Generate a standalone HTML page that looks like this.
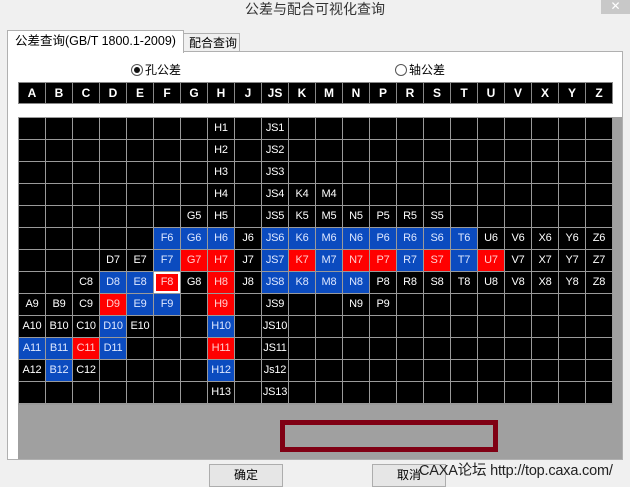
<!DOCTYPE html>
<html><head><meta charset="utf-8"><style>
*{margin:0;padding:0;box-sizing:border-box}
body{width:630px;height:487px;background:#f0f0f0;font-family:"Liberation Sans","Noto Sans CJK SC",sans-serif;position:relative;overflow:hidden}
.abs{position:absolute}
.title{left:0;width:630px;top:0;text-align:center;font-size:14px;color:#333;line-height:18px}
.close{left:601px;top:0;width:29px;height:14px;background:#c8c8c8;color:#fff;font-size:12px;text-align:center;line-height:13px}
.pane{left:7px;top:51px;width:616px;height:409px;background:#fff;border:1px solid #b0b0b0}
.tab1{left:7px;top:30px;width:177px;height:23px;background:#fff;border:1px solid #b0b0b0;border-bottom:none;font-size:12.5px;line-height:20px;padding-left:7px;z-index:2;color:#000}
.tab2{left:183px;top:33px;width:57px;height:19px;background:#f0f0f0;border:1px solid #b0b0b0;font-size:12px;line-height:18px;padding-left:5px}
.radio{font-size:12px;line-height:14px;top:63px}
.radio i{display:inline-block;width:12px;height:12px;border:1px solid #555;border-radius:50%;vertical-align:-2px;margin-right:2px;position:relative;background:#fff}
.radio i.on::after{content:"";position:absolute;left:2px;top:2px;width:6px;height:6px;border-radius:50%;background:#111}
.hdr{left:18px;top:82px;width:595px;height:22px;display:grid;grid-template-columns:repeat(22,26px);gap:1px;background:#888;padding:1px}
.hdr span{background:#000;color:#fff;font-weight:bold;font-size:12px;text-align:center;line-height:20px}
.gp{left:18px;top:117px;width:604px;height:342px;background:#a0a0a0}
.grid{left:18px;top:117px;width:595px;height:288px;display:grid;grid-template-columns:repeat(22,26px);grid-auto-rows:21px;gap:1px;background:#9a9a9a;padding:1px}
.grid i{background:#000;color:#fff;font-style:normal;font-size:11px;letter-spacing:-0.2px;text-align:center;line-height:21px;white-space:nowrap;overflow:hidden}
.grid i.b{background:#0b4bbf;color:#dfe8ff}
.grid i.r{background:#f00;color:#ffd0d0}
.grid i.w{box-shadow:inset 0 0 0 2px #fff}
.redbox{left:280px;top:420px;width:218px;height:32px;border:5px solid #800014}
.btn{top:464px;width:74px;height:23px;background:#e6e6e6;border:1px solid #adadad;font-size:12px;text-align:center;line-height:21px}
.wm{left:419px;top:461px;font-size:14.5px;letter-spacing:-0.2px;color:#222;line-height:20px}
</style></head><body>
<div class="abs title">公差与配合可视化查询</div>
<div class="abs close">✕</div>
<div class="abs pane"></div>
<div class="abs tab2">配合查询</div>
<div class="abs tab1">公差查询(GB/T 1800.1-2009)</div>
<div class="abs radio" style="left:131px"><i class="on"></i>孔公差</div>
<div class="abs radio" style="left:395px"><i></i>轴公差</div>
<div class="abs hdr"><span>A</span><span>B</span><span>C</span><span>D</span><span>E</span><span>F</span><span>G</span><span>H</span><span>J</span><span>JS</span><span>K</span><span>M</span><span>N</span><span>P</span><span>R</span><span>S</span><span>T</span><span>U</span><span>V</span><span>X</span><span>Y</span><span>Z</span></div>
<div class="abs gp"></div>
<div class="abs grid">
<i></i><i></i><i></i><i></i><i></i><i></i><i></i><i>H1</i><i></i><i>JS1</i><i></i><i></i><i></i><i></i><i></i><i></i><i></i><i></i><i></i><i></i><i></i><i></i>
<i></i><i></i><i></i><i></i><i></i><i></i><i></i><i>H2</i><i></i><i>JS2</i><i></i><i></i><i></i><i></i><i></i><i></i><i></i><i></i><i></i><i></i><i></i><i></i>
<i></i><i></i><i></i><i></i><i></i><i></i><i></i><i>H3</i><i></i><i>JS3</i><i></i><i></i><i></i><i></i><i></i><i></i><i></i><i></i><i></i><i></i><i></i><i></i>
<i></i><i></i><i></i><i></i><i></i><i></i><i></i><i>H4</i><i></i><i>JS4</i><i>K4</i><i>M4</i><i></i><i></i><i></i><i></i><i></i><i></i><i></i><i></i><i></i><i></i>
<i></i><i></i><i></i><i></i><i></i><i></i><i>G5</i><i>H5</i><i></i><i>JS5</i><i>K5</i><i>M5</i><i>N5</i><i>P5</i><i>R5</i><i>S5</i><i></i><i></i><i></i><i></i><i></i><i></i>
<i></i><i></i><i></i><i></i><i></i><i class="b">F6</i><i class="b">G6</i><i class="b">H6</i><i>J6</i><i class="b">JS6</i><i class="b">K6</i><i class="b">M6</i><i class="b">N6</i><i class="b">P6</i><i class="b">R6</i><i class="b">S6</i><i class="b">T6</i><i>U6</i><i>V6</i><i>X6</i><i>Y6</i><i>Z6</i>
<i></i><i></i><i></i><i>D7</i><i>E7</i><i class="b">F7</i><i class="r">G7</i><i class="r">H7</i><i>J7</i><i class="b">JS7</i><i class="r">K7</i><i class="b">M7</i><i class="r">N7</i><i class="r">P7</i><i class="b">R7</i><i class="r">S7</i><i class="b">T7</i><i class="r">U7</i><i>V7</i><i>X7</i><i>Y7</i><i>Z7</i>
<i></i><i></i><i>C8</i><i class="b">D8</i><i class="b">E8</i><i class="r w">F8</i><i>G8</i><i class="r">H8</i><i>J8</i><i class="b">JS8</i><i class="b">K8</i><i class="b">M8</i><i class="b">N8</i><i>P8</i><i>R8</i><i>S8</i><i>T8</i><i>U8</i><i>V8</i><i>X8</i><i>Y8</i><i>Z8</i>
<i>A9</i><i>B9</i><i>C9</i><i class="r">D9</i><i class="b">E9</i><i class="b">F9</i><i></i><i class="r">H9</i><i></i><i>JS9</i><i></i><i></i><i>N9</i><i>P9</i><i></i><i></i><i></i><i></i><i></i><i></i><i></i><i></i>
<i>A10</i><i>B10</i><i>C10</i><i class="b">D10</i><i>E10</i><i></i><i></i><i class="b">H10</i><i></i><i>JS10</i><i></i><i></i><i></i><i></i><i></i><i></i><i></i><i></i><i></i><i></i><i></i><i></i>
<i class="b">A11</i><i class="b">B11</i><i class="r">C11</i><i class="b">D11</i><i></i><i></i><i></i><i class="r">H11</i><i></i><i>JS11</i><i></i><i></i><i></i><i></i><i></i><i></i><i></i><i></i><i></i><i></i><i></i><i></i>
<i>A12</i><i class="b">B12</i><i>C12</i><i></i><i></i><i></i><i></i><i class="b">H12</i><i></i><i>Js12</i><i></i><i></i><i></i><i></i><i></i><i></i><i></i><i></i><i></i><i></i><i></i><i></i>
<i></i><i></i><i></i><i></i><i></i><i></i><i></i><i>H13</i><i></i><i>JS13</i><i></i><i></i><i></i><i></i><i></i><i></i><i></i><i></i><i></i><i></i><i></i><i></i>
</div>
<div class="abs redbox"></div>
<div class="abs btn" style="left:209px">确定</div>
<div class="abs btn" style="left:372px">取消</div>
<div class="abs wm">CAXA论坛 http://top.caxa.com/</div>
</body></html>
